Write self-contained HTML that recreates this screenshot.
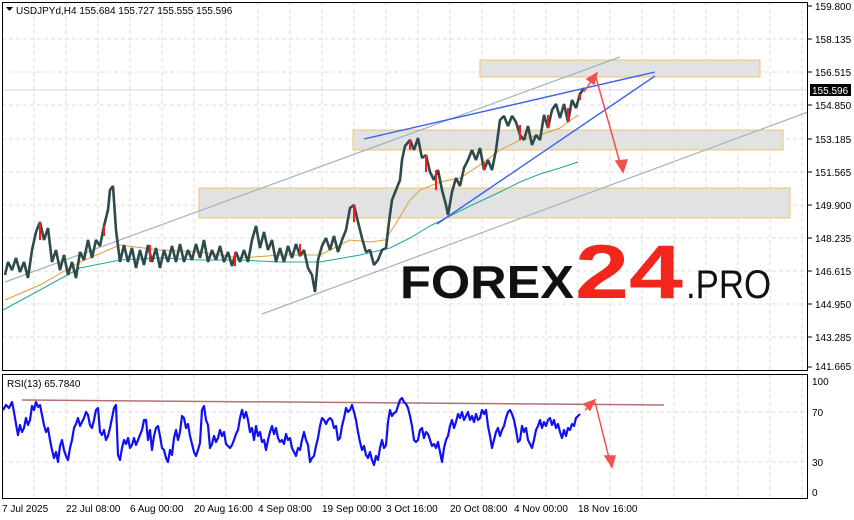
<!DOCTYPE html>
<html><head><meta charset="utf-8"><style>
html,body{margin:0;padding:0;background:#fff;width:854px;height:520px;overflow:hidden;font-family:"Liberation Sans","DejaVu Sans",sans-serif}
svg{position:absolute;left:0;top:0}
</style></head><body>
<svg width="854" height="520" viewBox="0 0 854 520" font-family="Liberation Sans, DejaVu Sans, sans-serif" font-size="10">
<defs><clipPath id="m"><rect x="2" y="2" width="806" height="368"/></clipPath>
<clipPath id="r"><rect x="2" y="374" width="806" height="125"/></clipPath></defs>
<g stroke="#ddd" stroke-dasharray="4,3" stroke-width="1">
<path d="M2 39H808M2 72H808M2 105H808M2 139H808M2 172H808M2 205H808M2 238H808M2 271H808M2 304H808M2 337H808"/>
<path d="M34 2V370M66 2V370M98 2V370M130 2V370M162 2V370M194 2V370M226 2V370M258 2V370M290 2V370M322 2V370M354 2V370M386 2V370M418 2V370M450 2V370M482 2V370M514 2V370M546 2V370M578 2V370M610 2V370M642 2V370M674 2V370M706 2V370M738 2V370M770 2V370M802 2V370"/>
<path d="M34 374V499M66 374V499M98 374V499M130 374V499M162 374V499M194 374V499M226 374V499M258 374V499M290 374V499M322 374V499M354 374V499M386 374V499M418 374V499M450 374V499M482 374V499M514 374V499M546 374V499M578 374V499M610 374V499M642 374V499M674 374V499M706 374V499M738 374V499M770 374V499M802 374V499"/>
<path d="M2 412H808M2 462H808"/>
</g>
<g clip-path="url(#m)">
<rect x="480" y="60" width="280" height="17" fill="#e2e2e2" stroke="#f2c46a"/>
<rect x="353" y="130" width="430" height="20" fill="#e2e2e2" stroke="#f2c46a"/>
<rect x="199" y="188" width="591" height="30" fill="#e2e2e2" stroke="#f2c46a"/>
<line x1="0" y1="90" x2="808" y2="90" stroke="#d8d8d8"/>
<line x1="5" y1="282" x2="620" y2="57" stroke="#9fb3c3" stroke-width="1.2"/>
<line x1="262" y1="314" x2="808" y2="112" stroke="#9fb3c3" stroke-width="1.2"/>
<polyline fill="none" stroke="#d8a030" stroke-width="1" points="5,300 40,285 80,262 120,245 160,250 200,252 240,258 280,255 320,255 350,240 370,242 385,240 395,225 410,200 420,190 440,182 460,178 480,165 500,150 520,140 540,135 560,128 578,115"/>
<polyline fill="none" stroke="#20a898" stroke-width="1" points="3,310 40,290 80,268 120,260 160,258 200,260 240,260 280,262 320,262 360,255 390,248 410,238 430,226 450,216 470,206 500,192 520,182 540,174 560,168 578,162"/>
<polyline fill="none" stroke="#2f4a4a" stroke-width="2.6" stroke-linejoin="bevel" points="5,275 8,262 12,270 16,258 20,272 24,262 28,278 32,250 36,232 40,222 44,240 48,228 52,262 56,250 60,270 64,255 68,275 72,262 76,278 80,252 84,260 88,240 92,258 96,240 100,246 104,226 108,210 110,190 113,186 116,230 120,262 124,245 128,262 132,248 136,268 140,250 144,265 148,245 152,262 156,248 160,268 164,250 168,262 172,246 176,262 180,244 184,262 188,250 192,260 196,244 200,258 204,240 208,262 212,250 216,260 220,246 224,262 228,252 232,266 236,252 240,262 244,250 248,262 252,240 256,226 260,248 264,232 268,250 272,240 276,262 280,248 284,262 288,246 292,258 296,244 300,256 304,250 308,268 312,275 315,292 318,260 322,246 326,238 330,250 334,236 338,252 342,240 346,230 350,208 354,205 358,222 362,238 366,252 370,250 374,265 378,260 382,250 386,248 389,222 392,200 396,190 400,180 402,160 405,146 410,140 414,150 418,138 422,158 426,155 430,172 434,180 438,170 442,190 446,205 448,215 452,192 456,178 460,186 464,168 468,160 472,150 476,160 480,148 484,170 488,160 492,170 496,150 500,120 504,116 508,126 512,116 516,122 520,135 524,140 528,126 532,145 536,135 540,140 544,115 548,128 552,110 556,104 560,118 564,104 568,122 572,100 576,108 580,94 584,88"/>
<g stroke="#ff1a1a" stroke-width="2"><path d="M40 222V240M104 226V236M150 245V262M235 252V266M300 244V256M354 205V222M410 140V150M426 155V172M436 170V190M484 162V170M520 125V140M548 115V128M568 108V122M580 94V100"/></g>
<line x1="364" y1="139" x2="655" y2="72" stroke="#3a64e8" stroke-width="1.4"/>
<line x1="437" y1="224" x2="655" y2="76" stroke="#3a64e8" stroke-width="1.4"/>
<g stroke="#f05050" stroke-width="1.5" fill="#f05050">
<line x1="584" y1="92" x2="592" y2="80"/><path d="M597 73L587 79L594 84Z"/>
<line x1="595" y1="74" x2="620" y2="163"/><path d="M623 172L616 161L627 160Z"/>
</g>
</g>
<text x="400" y="298" font-size="46" font-weight="bold" fill="#111" textLength="174" lengthAdjust="spacingAndGlyphs">FOREX</text>
<text x="575" y="298" font-size="76" font-weight="bold" fill="#f2261c" textLength="108" lengthAdjust="spacingAndGlyphs">24</text>
<text x="686" y="298" font-size="40" fill="#111" textLength="85" lengthAdjust="spacingAndGlyphs">.PRO</text>
<g clip-path="url(#r)">
<line x1="22" y1="400" x2="664" y2="405" stroke="#a05050" stroke-width="1.5" opacity="0.8"/>
<polyline fill="none" stroke="#1010f0" stroke-width="2.2" stroke-linejoin="round" points="3,410 6,405 9,408 12,402 14,412 16,424 18,435 20,425 22,432 24,428 26,418 28,425 30,420 32,406 34,410 36,402 38,407 40,405 42,415 44,425 46,432 48,428 50,440 52,450 54,458 56,452 58,462 60,446 62,440 64,450 66,456 68,460 70,448 72,440 74,428 76,424 78,418 80,426 82,422 84,418 86,412 88,415 90,425 92,428 94,420 96,410 98,408 100,432 102,435 104,430 106,440 108,436 110,428 112,418 114,408 116,405 118,455 120,460 122,448 124,440 126,444 128,438 130,448 132,445 134,438 136,445 138,440 140,435 142,430 144,420 146,420 148,440 150,430 152,450 154,436 156,428 158,426 160,436 162,448 164,450 166,458 168,462 170,450 172,455 174,438 176,430 178,440 180,432 182,416 184,418 186,428 188,424 190,436 192,444 194,452 196,456 198,450 200,443 202,410 204,406 206,420 208,425 210,448 212,444 214,436 216,442 218,438 220,430 222,436 224,432 226,444 228,446 230,448 232,445 234,440 236,434 238,430 240,418 242,410 244,418 246,412 248,420 250,432 252,428 254,440 256,426 258,436 260,432 262,442 264,440 266,450 268,440 270,432 272,426 274,434 276,428 278,438 280,442 282,440 284,444 286,434 288,440 290,438 292,448 294,452 296,456 298,448 300,450 302,440 304,432 306,440 308,445 310,462 312,458 314,456 316,446 318,438 320,426 322,418 324,420 326,424 328,420 330,418 332,420 334,428 336,426 338,440 340,438 342,426 344,418 346,408 348,412 350,410 352,405 354,412 356,420 358,432 360,442 362,450 364,446 366,455 368,458 370,452 372,460 374,465 376,456 378,460 380,448 382,440 384,448 386,445 388,422 390,410 392,416 394,413 396,412 398,406 400,400 402,398 404,402 406,404 408,408 410,416 412,426 414,440 416,442 418,440 420,430 422,428 424,438 426,432 428,434 430,440 432,446 434,444 436,448 438,442 440,452 442,462 444,448 446,440 448,436 450,426 452,420 454,428 456,422 458,414 460,418 462,412 464,420 466,416 468,412 470,420 472,416 474,422 476,414 478,420 480,418 482,410 484,414 486,410 488,426 490,436 492,448 494,440 496,432 498,428 500,436 502,430 504,426 506,418 508,412 510,410 512,414 514,420 516,430 518,442 520,440 522,426 524,432 526,428 528,440 530,444 532,448 534,440 536,430 538,426 540,420 542,428 544,422 546,426 548,420 550,418 552,425 554,420 556,428 558,424 560,432 562,438 564,430 566,436 568,428 570,430 572,424 574,426 576,418 578,416 580,414"/>
<g stroke="#f05050" stroke-width="1.5" fill="#f05050">
<line x1="585" y1="410" x2="590" y2="406"/><path d="M595 400L584 404L590 410Z"/>
<line x1="595" y1="402" x2="609" y2="458"/><path d="M612 467L605 456L615 456Z"/>
</g>
</g>
<rect x="2.5" y="2.5" width="805" height="368" fill="none" stroke="#000"/>
<rect x="2.5" y="374.5" width="805" height="124" fill="none" stroke="#000"/>
<g fill="#000">
<path d="M6 7h7l-3.5 4z"/>
<text x="16" y="14">USDJPYd,H4  155.684 155.727 155.555 155.596</text>
<text x="7" y="387">RSI(13) 65.7840</text>
<g font-size="10">
<text x="815" y="10">159.800</text><text x="815" y="43">158.135</text><text x="815" y="76">156.515</text>
<text x="815" y="109">154.850</text><text x="815" y="143">153.185</text><text x="815" y="176">151.565</text>
<text x="815" y="209">149.900</text><text x="815" y="242">148.235</text><text x="815" y="275">146.615</text>
<text x="815" y="308">144.950</text><text x="815" y="341">143.285</text><text x="815" y="370">141.665</text>
<text x="812" y="385">100</text><text x="812" y="416">70</text><text x="812" y="466">30</text><text x="812" y="496">0</text>
</g>
<g stroke="#000"><path d="M808 6h4M808 39h4M808 72h4M808 105h4M808 139h4M808 172h4M808 205h4M808 238h4M808 271h4M808 304h4M808 337h4M808 367h4"/></g>
<rect x="810" y="84" width="41" height="12"/>
<text x="812" y="94" fill="#fff">155.596</text>
<g font-size="10">
<text x="2" y="512">7 Jul 2025</text><text x="66" y="512">22 Jul 08:00</text><text x="130" y="512">6 Aug 00:00</text>
<text x="194" y="512">20 Aug 16:00</text><text x="258" y="512">4 Sep 08:00</text><text x="322" y="512">19 Sep 00:00</text>
<text x="386" y="512">3 Oct 16:00</text><text x="450" y="512">20 Oct 08:00</text><text x="514" y="512">4 Nov 00:00</text>
<text x="578" y="512">18 Nov 16:00</text>
</g>
</g>
</svg>
</body></html>
